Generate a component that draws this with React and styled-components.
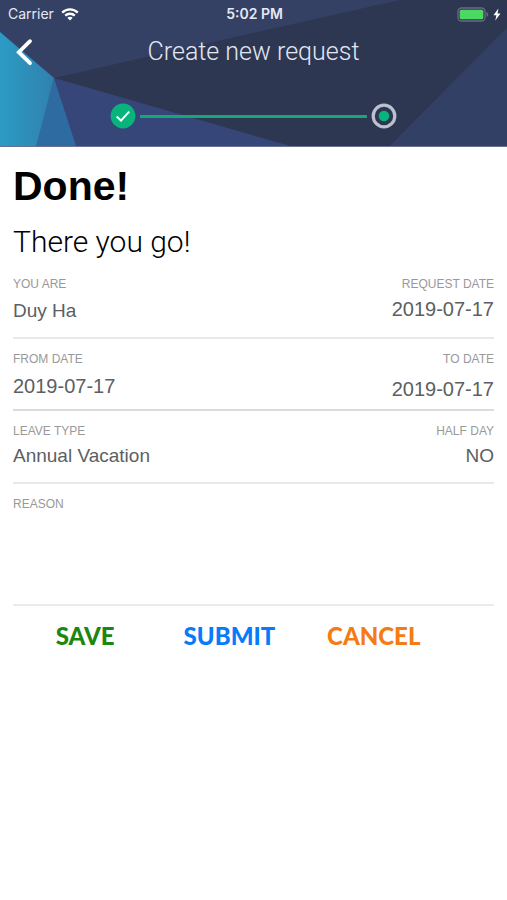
import React from "react";
import styled, { createGlobalStyle } from "styled-components";

const GlobalStyle = createGlobalStyle`
  *, *::before, *::after { box-sizing: border-box; }
  body {
    margin: 0;
    background: #fff;
    color: #000;
    font-family: "Liberation Sans", Arial, sans-serif;
  }
`;

const Header = styled.header`
  position: relative;
  isolation: isolate;
  overflow: hidden;
  padding-bottom: 17px;
  background: #344064;
  border-bottom: 1px solid #6b7095;
`;

const Backdrop = styled.svg`
  position: absolute;
  inset: 0;
  z-index: -1;
  width: 100%;
  height: 100%;
`;

const StatusBar = styled.div`
  display: grid;
  grid-template-columns: 1fr auto 1fr;
  align-items: center;
  height: 28px;
  padding: 0 6px 0 8px;
  color: #e6e9f3;
  font: 400 14px/20px Inter, sans-serif;
`;

const StatusGroup = styled.div`
  display: flex;
  align-items: center;
  gap: ${(p) => (p.$end ? "4px" : "7px")};
  justify-content: ${(p) => (p.$end ? "flex-end" : "flex-start")};
`;

const Clock = styled.time`
  font-weight: 600;
`;

const NavBar = styled.nav`
  display: grid;
  grid-template-columns: 48px 1fr 48px;
  align-items: center;
  height: 48px;
`;

const BackButton = styled.button`
  display: flex;
  align-items: center;
  justify-content: center;
  height: 48px;
  padding: 0;
  border: 0;
  background: none;
  cursor: pointer;
`;

const Title = styled.h1`
  margin: 0;
  color: #e3e7f3;
  font: 300 25px/32px Roboto, sans-serif;
  text-align: center;
  white-space: nowrap;
`;

const Stepper = styled.div`
  display: flex;
  align-items: center;
  gap: 4px;
  width: 56.5%;
  margin: 27px auto 0;
`;

const StepIcon = styled.svg`
  flex: none;
  width: 26px;
  height: 26px;
`;

const StepLine = styled.div`
  flex: 1;
  height: 3px;
  background: #13a878;
`;

const Content = styled.main`
  padding: 15px 13px 0;
`;

const Heading = styled.h2`
  margin: 0;
  font-size: 41px;
  line-height: 48px;
  font-weight: 700;
`;

const Subheading = styled.p`
  margin: 16px 0 18px;
  font: 300 30px/32px Roboto, sans-serif;
`;

const Details = styled.dl`
  margin: 0;
`;

const Row = styled.div`
  display: flex;
  justify-content: space-between;
  margin-bottom: 12px;
  padding-bottom: ${(p) => p.$pad}px;
  border-bottom: 2px solid ${(p) => (p.$strong ? "#dcdcdc" : "#e9e9e9")};
`;

const Field = styled.div`
  display: flex;
  flex-direction: column;
  gap: ${(p) => p.$gap}px;
  text-align: ${(p) => (p.$end ? "right" : "left")};
`;

const Label = styled.dt`
  color: #999;
  font-size: 12px;
  line-height: 16px;
`;

const Value = styled.dd`
  margin: 0;
  color: #5c5f63;
  font-size: ${(p) => (p.$date ? 20 : 19)}px;
  line-height: 24px;
`;

const ReasonField = styled.div`
  display: flex;
  flex-direction: column;
  border-bottom: 2px solid #ebebeb;
`;

const ReasonLabel = styled.label`
  color: #999;
  font-size: 12px;
  line-height: 16px;
`;

const ReasonInput = styled.textarea`
  height: 92px;
  padding: 7px 0;
  border: 0;
  outline: 0;
  resize: none;
  background: none;
  color: #5c5f63;
  font: 19px/24px "Liberation Sans", Arial, sans-serif;
`;

const Actions = styled.div`
  display: grid;
  grid-template-columns: repeat(3, 30%);
  padding: 14px 0;
`;

const ActionButton = styled.button`
  padding: 0;
  border: 0;
  background: none;
  color: ${(p) => p.$color};
  font: 900 24px/32px Lato, sans-serif;
  cursor: pointer;
`;

const rows = [
  {
    pad: 14,
    fields: [
      { label: "YOU ARE", value: "Duy Ha", gap: 7 },
      { label: "REQUEST DATE", value: "2019-07-17", gap: 5, date: true },
    ],
  },
  {
    pad: 8,
    strong: true,
    fields: [
      { label: "FROM DATE", value: "2019-07-17", gap: 7, date: true },
      { label: "TO DATE", value: "2019-07-17", gap: 10, date: true },
    ],
  },
  {
    pad: 14,
    fields: [
      { label: "LEAVE TYPE", value: "Annual Vacation", gap: 5 },
      { label: "HALF DAY", value: "NO", gap: 5 },
    ],
  },
];

const actions = [
  { label: "SAVE", color: "#1b8710" },
  { label: "SUBMIT", color: "#087bfa" },
  { label: "CANCEL", color: "#f57b13" },
];

function HeaderBackdrop() {
  return (
    <Backdrop viewBox="0 0 507 146" preserveAspectRatio="none" aria-hidden="true">
      <defs>
        <linearGradient id="teal" x1="0" x2="1" y1="0" y2="0">
          <stop offset="0" stopColor="#2b9bc5" />
          <stop offset="1" stopColor="#3181ad" />
        </linearGradient>
      </defs>
      <path d="M54 78 L253 33 L400 0 H507 V28 L390 146 H290 Z" fill="#2e3752" />
      <path d="M507 28 L390 146 H507 Z" fill="#334065" />
      <path d="M54 78 L290 146 H75 Z" fill="#364678" />
      <path d="M54 78 L76 146 H35 Z" fill="#2d6ba0" />
      <path d="M0 32 L54 78 L36 146 H0 Z" fill="url(#teal)" />
    </Backdrop>
  );
}

function WifiIcon() {
  return (
    <svg width="18" height="13" viewBox="0 0 18 13" fill="none" aria-hidden="true">
      <path d="M1.2 4.6 C5.6 .3 12.4 .3 16.8 4.6" stroke="#fff" strokeWidth="2.3" />
      <path d="M4.2 7.7 C6.9 5.1 11.1 5.1 13.8 7.7" stroke="#fff" strokeWidth="2.3" />
      <path d="M9 12.6 L6.3 9.8 C7.8 8.4 10.2 8.4 11.7 9.8 Z" fill="#fff" />
    </svg>
  );
}

function BatteryIcon() {
  return (
    <svg width="32" height="15" viewBox="0 0 32 15" aria-hidden="true">
      <rect x="1" y="1" width="27" height="13" rx="3.5" fill="none" stroke="#666c82" strokeWidth="1.3" />
      <rect x="2.7" y="2.7" width="23.6" height="9.6" rx="1.6" fill="#4bd964" />
      <path d="M29.5 5 C31.8 5.7 31.8 9.3 29.5 10 Z" fill="#666c82" />
    </svg>
  );
}

function BoltIcon() {
  return (
    <svg width="8" height="13" viewBox="0 0 8 13" aria-hidden="true">
      <path d="M5.4 .5 L.5 7.2 H3.4 L2.3 12.5 L7.5 5.4 H4.6 Z" fill="#fff" />
    </svg>
  );
}

export default function App() {
  return (
    <>
      <GlobalStyle />
      <Header>
        <HeaderBackdrop />
        <StatusBar>
          <StatusGroup>
            <span>Carrier</span>
            <WifiIcon />
          </StatusGroup>
          <Clock>5:02 PM</Clock>
          <StatusGroup $end>
            <BatteryIcon />
            <BoltIcon />
          </StatusGroup>
        </StatusBar>
        <NavBar>
          <BackButton type="button" aria-label="Back">
            <svg width="18" height="28" viewBox="0 0 18 28" fill="none" aria-hidden="true">
              <path d="M15 3.2 L3.8 14.2 L15 25.2" stroke="#fff" strokeWidth="3.8" strokeLinecap="round" />
            </svg>
          </BackButton>
          <Title>Create new request</Title>
        </NavBar>
        <Stepper>
          <StepIcon viewBox="0 0 26 26" role="img" aria-label="Step 1 complete">
            <circle cx="13" cy="13" r="12.4" fill="#08b47b" />
            <path d="M6.7 13.5 L11 17.6 L19.2 8.6" fill="none" stroke="#fff" strokeWidth="2" />
          </StepIcon>
          <StepLine />
          <StepIcon viewBox="0 0 26 26" role="img" aria-label="Step 2 current">
            <circle cx="13" cy="13" r="10.8" fill="none" stroke="#bcc1cf" strokeWidth="3.2" />
            <circle cx="13" cy="13" r="5.3" fill="#08b47b" />
          </StepIcon>
        </Stepper>
      </Header>
      <Content>
        <Heading>Done!</Heading>
        <Subheading>There you go!</Subheading>
        <Details>
          {rows.map((row) => (
            <Row key={row.fields[0].label} $pad={row.pad} $strong={row.strong}>
              {row.fields.map((field, i) => (
                <Field key={field.label} $gap={field.gap} $end={i === 1}>
                  <Label>{field.label}</Label>
                  <Value $date={field.date}>{field.value}</Value>
                </Field>
              ))}
            </Row>
          ))}
        </Details>
        <ReasonField>
          <ReasonLabel htmlFor="reason">REASON</ReasonLabel>
          <ReasonInput id="reason" />
        </ReasonField>
        <Actions>
          {actions.map((action) => (
            <ActionButton key={action.label} type="button" $color={action.color}>
              {action.label}
            </ActionButton>
          ))}
        </Actions>
      </Content>
    </>
  );
}
